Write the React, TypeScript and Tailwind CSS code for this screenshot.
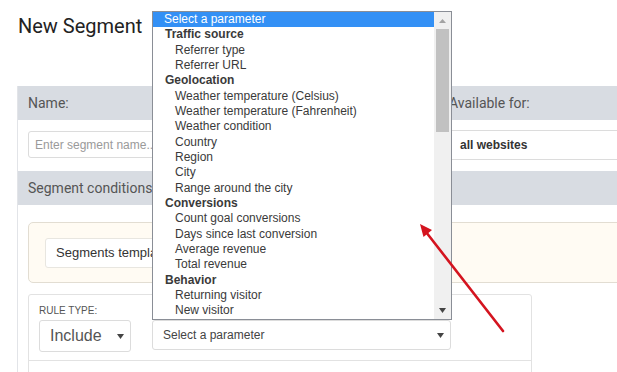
import React from 'react'

const groups: { label: string; items: string[] }[] = [
    { label: 'Traffic source', items: ['Referrer type', 'Referrer URL'] },
    {
        label: 'Geolocation',
        items: [
            'Weather temperature (Celsius)',
            'Weather temperature (Fahrenheit)',
            'Weather condition',
            'Country',
            'Region',
            'City',
            'Range around the city',
        ],
    },
    {
        label: 'Conversions',
        items: ['Count goal conversions', 'Days since last conversion', 'Average revenue', 'Total revenue'],
    },
    { label: 'Behavior', items: ['Returning visitor', 'New visitor'] },
]

function Caret({ className = '' }: { className?: string }) {
    return (
        <svg width="7" height="5" viewBox="0 0 7 5" className={className}>
            <path d="M0 0 L7 0 L3.5 5 Z" fill="#444" />
        </svg>
    )
}

function ParameterList() {
    return (
        <div className="absolute left-[152px] top-[11px] w-[300px] h-[309px] border border-[#8a8e96] bg-white flex font-['Liberation_Sans',Arial,sans-serif] text-[12px] text-[#3a3a3a]">
            <div className="flex-1 flex flex-col">
                <div className="h-[15.33px] leading-[15.33px] pl-[11px] bg-[#3390f5] text-white">Select a parameter</div>
                {groups.map(g => (
                    <div key={g.label}>
                        <div className="h-[15.33px] leading-[15.33px] pl-[12px] font-bold text-[#3a3a3a]">{g.label}</div>
                        {g.items.map(i => (
                            <div key={i} className="h-[15.33px] leading-[15.33px] pl-[22px] whitespace-nowrap">
                                {i}
                            </div>
                        ))}
                    </div>
                ))}
            </div>
            <div className="w-[17px] bg-[#f0f0f0] flex flex-col">
                <div className="h-[17px] flex items-center justify-center">
                    <svg width="7" height="4" viewBox="0 0 7 4">
                        <path d="M0 4 L7 4 L3.5 0 Z" fill="#a3a3a3" />
                    </svg>
                </div>
                <div className="mx-[2px] h-[103px] bg-[#c1c1c1]" />
                <div className="flex-1" />
                <div className="h-[17px] flex items-center justify-center">
                    <Caret />
                </div>
            </div>
        </div>
    )
}

function Arrow() {
    return (
        <svg className="absolute left-0 top-0 pointer-events-none" width="617" height="372" viewBox="0 0 617 372">
            <line x1="503" y1="331" x2="426" y2="232" stroke="#d4141f" strokeWidth="2.6" strokeLinecap="round" />
            <polygon points="420,224 432,230 423.5,237" fill="#d4141f" />
        </svg>
    )
}

export default function App() {
    return (
        <div className="relative w-[617px] h-[372px] overflow-hidden bg-white font-['Roboto','Liberation_Sans',sans-serif]">
            <h1 className="pl-[18px] pt-[14px] text-[20px] leading-[24px] text-[#222]">New Segment</h1>

            <div className="mt-[48px] ml-[17px] w-[640px] border-l border-[#e2e4e8]">
                {/* name row */}
                <div className="h-[34px] bg-[#d8dce2] flex items-center text-[14px] text-[#555]">
                    <div className="w-[431px] pl-[10px]">Name:</div>
                    <div>Available for:</div>
                </div>
                <div className="h-[51px] flex">
                    <div className="w-[431px] pl-[10px] pt-[11px]">
                        <input
                            className="w-[200px] h-[27px] px-[6px] border border-[#dcdcdc] rounded-[3px] text-[12px] font-['Liberation_Sans',Arial,sans-serif] placeholder-[#9a9a9a] outline-none"
                            placeholder="Enter segment name..."
                        />
                    </div>
                    <div className="flex-1 pt-[10px]">
                        <div className="h-[30px] border border-[#dcdcdc] flex items-center pl-[10px] text-[12px] font-bold text-[#333] font-['Liberation_Sans',Arial,sans-serif]">
                            all websites
                        </div>
                    </div>
                </div>

                {/* conditions */}
                <div className="h-[34px] bg-[#d8dce2] flex items-center pl-[10px] text-[14px] text-[#555]">
                    Segment conditions
                </div>
                <div className="pl-[10px] pt-[17px] font-['Liberation_Sans',Arial,sans-serif]">
                    <div className="h-[61px] border border-[#e2ddd2] rounded-[5px] bg-[#fffbf3] pl-[16px] pt-[15px]">
                        <div className="w-[200px] h-[30px] border border-[#e8e6e0] rounded-[3px] bg-white flex items-center pl-[10px] text-[13px] text-[#333]">
                            Segments templates
                        </div>
                    </div>

                    <div className="mt-[11px] w-[504px] h-[90px] border border-[#e2e2e2] rounded-[3px]">
                        <div className="px-[10px] pt-[10px]">
                            <div className="text-[10px] leading-[12px] text-[#555] uppercase">Rule type:</div>
                            <div className="mt-[3px] flex items-start gap-[21px]">
                                <div className="w-[92px] h-[32px] border border-[#dcdcdc] rounded-[3px] flex items-center justify-between pl-[10px] pr-[6px]">
                                    <span className="text-[16px] text-[#555]">Include</span>
                                    <Caret />
                                </div>
                                <div className="w-[299px] h-[30px] border border-[#dcdcdc] rounded-[3px] flex items-center justify-between pl-[10px] pr-[6px]">
                                    <span className="text-[12px] text-[#444]">Select a parameter</span>
                                    <Caret />
                                </div>
                            </div>
                        </div>
                        <div className="mt-[8px] border-t border-[#e2e2e2]" />
                    </div>
                </div>
            </div>

            <ParameterList />
            <Arrow />
        </div>
    )
}
